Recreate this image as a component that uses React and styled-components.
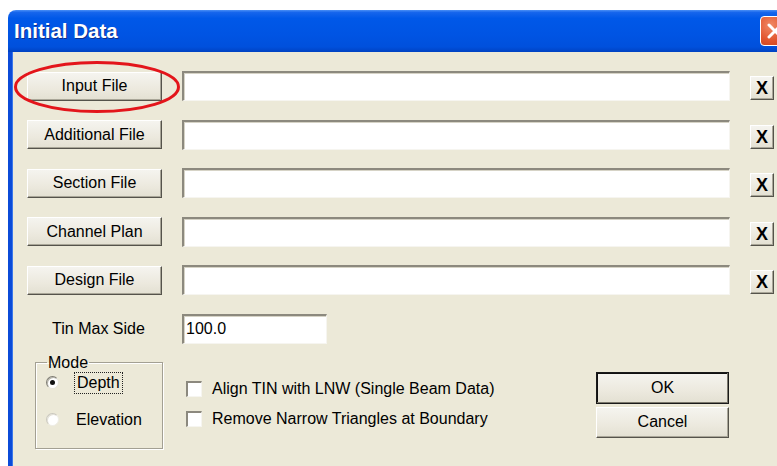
import React from "react";
import styled, { createGlobalStyle } from "styled-components";

const GlobalStyle = createGlobalStyle`
  html, body {
    margin: 0;
    background: #ffffff;
    overflow: hidden;
  }
  body {
    font-family: "Liberation Sans", Arial, sans-serif;
    font-size: 16px;
    color: #000;
  }
`;

const FILE_ROWS = [
  "Input File",
  "Additional File",
  "Section File",
  "Channel Plan",
  "Design File",
];

const InitialData = () => {
  return (
    <Window>
      <TitleBar>
        <Title>Initial Data</Title>
        <CloseButton aria-label="Close">
          <svg width="20" height="20" viewBox="0 0 20 20">
            <path
              d="M4 4 L16 16 M16 4 L4 16"
              stroke="#ffffff"
              strokeWidth="3"
              strokeLinecap="round"
            />
          </svg>
        </CloseButton>
      </TitleBar>
      <Body>
        <FileGrid>
          {FILE_ROWS.map((label, i) => (
            <React.Fragment key={label}>
              <ButtonCell>
                <PushButton>{label}</PushButton>
                {i === 0 && (
                  <Highlight viewBox="0 0 168 54" preserveAspectRatio="none">
                    <ellipse
                      cx="84"
                      cy="27"
                      rx="81.5"
                      ry="24.5"
                      fill="none"
                      stroke="#e3151b"
                      strokeWidth="3"
                    />
                  </Highlight>
                )}
              </ButtonCell>
              <TextField />
              <ClearButton>X</ClearButton>
            </React.Fragment>
          ))}
          <FieldLabel>Tin Max Side</FieldLabel>
          <TextField $width={145}>100.0</TextField>
        </FileGrid>

        <BottomRow>
          <GroupBox>
            <legend>Mode</legend>
            <RadioRow>
              <Radio $checked />
              <FocusLabel>Depth</FocusLabel>
            </RadioRow>
            <RadioRow>
              <Radio $faded />
              <span>Elevation</span>
            </RadioRow>
          </GroupBox>

          <Checks>
            <CheckRow>
              <CheckBox />
              <span>Align TIN with LNW (Single Beam Data)</span>
            </CheckRow>
            <CheckRow>
              <CheckBox />
              <span>Remove Narrow Triangles at Boundary</span>
            </CheckRow>
          </Checks>

          <Actions>
            <DialogButton $default>OK</DialogButton>
            <DialogButton>Cancel</DialogButton>
          </Actions>
        </BottomRow>
      </Body>
    </Window>
  );
};

const Window = styled.div`
  margin: 10px 0 0 8px;
  width: 800px;
  display: flex;
  flex-direction: column;
`;

const TitleBar = styled.div`
  height: 42px;
  box-sizing: border-box;
  display: flex;
  align-items: center;
  justify-content: space-between;
  padding: 0 0 0 6px;
  border-radius: 8px 8px 0 0;
  background: linear-gradient(
    to bottom,
    #4a8ff5 0%,
    #1665ec 6%,
    #0058e8 20%,
    #0054e3 60%,
    #0050dc 88%,
    #0042c2 100%
  );
`;

const Title = styled.div`
  font-family: "Liberation Sans", Arial, sans-serif;
  font-weight: bold;
  font-size: 20.5px;
  color: #ffffff;
  text-shadow: 1px 1px 0 #0f2f8c;
`;

const CloseButton = styled.div`
  width: 30px;
  height: 30px;
  margin-right: 18px;
  box-sizing: border-box;
  border: 1px solid #ffffff;
  border-radius: 4px;
  background: radial-gradient(circle at 35% 30%, #f08a66 0%, #e2562f 55%, #c23d18 100%);
  display: flex;
  align-items: center;
  justify-content: center;
`;

const Body = styled.div`
  height: 414px;
  box-sizing: border-box;
  background: #ece9d8;
  border-left: 4px solid #0b4bd8;
  box-shadow: inset 1px 0 0 #3a77ea;
  padding: 19px 0 0 15px;
`;

const FileGrid = styled.div`
  width: 747px;
  display: grid;
  grid-template-columns: 135px 548px 24px;
  column-gap: 20px;
  row-gap: 18.5px;
  align-items: center;
`;

const ButtonCell = styled.div`
  position: relative;
  display: flex;
`;

const Highlight = styled.svg`
  position: absolute;
  left: -14px;
  top: -12px;
  width: 168px;
  height: 54px;
  overflow: visible;
  pointer-events: none;
`;

const raised = `
  background: linear-gradient(to bottom, #f5f4ef 0%, #ece9de 60%, #e3e0d2 100%);
  border: 1px solid;
  border-color: #ffffff #55534b #55534b #ffffff;
  box-shadow: inset -1px -1px 0 #a9a698;
`;

const PushButton = styled.div`
  ${raised}
  width: 135px;
  height: 29px;
  box-sizing: border-box;
  display: flex;
  align-items: center;
  justify-content: center;
  font-size: 16px;
`;

const TextField = styled.div`
  width: ${(p) => (p.$width ? `${p.$width}px` : "100%")};
  justify-self: start;
  height: 30px;
  box-sizing: border-box;
  background: #ffffff;
  border-top: 2px solid #8c897e;
  border-left: 2px solid #8c897e;
  border-bottom: 1px solid #f6f5f0;
  border-right: 1px solid #f6f5f0;
  box-shadow: inset 1px 1px 0 #d6d3c6;
  padding: 0 2px;
  display: flex;
  align-items: center;
  font-size: 16px;
`;

const ClearButton = styled.div`
  ${raised}
  width: 24px;
  height: 24px;
  margin-top: 4px;
  box-sizing: border-box;
  display: flex;
  align-items: center;
  justify-content: center;
  font-weight: bold;
  font-size: 18px;
  line-height: 1;
`;

const FieldLabel = styled.div`
  text-align: center;
  padding-left: 8px;
  font-size: 16px;
`;

const BottomRow = styled.div`
  width: 747px;
  display: flex;
  align-items: flex-start;
  margin-top: 11px;
`;

const GroupBox = styled.fieldset`
  margin: 0 0 0 8px;
  width: 128px;
  height: 94px;
  box-sizing: border-box;
  padding: 2px 0 0 10px;
  border: 1px solid #a3a093;
  box-shadow: 1px 1px 0 #ffffff, inset 1px 1px 0 #ffffff;
  display: flex;
  flex-direction: column;
  gap: 17px;

  legend {
    padding: 0 1px;
    margin-left: 1px;
    font-size: 16px;
    line-height: 16px;
  }
`;

const RadioRow = styled.div`
  display: flex;
  align-items: center;
  gap: 17px;
  height: 20px;
  font-size: 16px;
`;

const Radio = styled.span`
  position: relative;
  width: 13px;
  height: 13px;
  border-radius: 50%;
  box-sizing: border-box;
  background: #ffffff;
  border: 1px solid;
  border-color: ${(p) => (p.$faded ? "#c9c7bd #eeede6 #eeede6 #c9c7bd" : "#7d7b72 #e6e4da #e6e4da #7d7b72")};
  box-shadow: inset 1px 1px 0 ${(p) => (p.$faded ? "#e4e2d8" : "#b6b4aa")};

  &::after {
    content: "";
    display: ${(p) => (p.$checked ? "block" : "none")};
    position: absolute;
    left: 3px;
    top: 3px;
    width: 5px;
    height: 5px;
    border-radius: 50%;
    background: #111;
  }
`;

const FocusLabel = styled.span`
  outline: 1px dotted #222;
  outline-offset: 1px;
  padding: 0 1px;
`;

const Checks = styled.div`
  margin-left: 23px;
  padding-top: 24px;
  display: flex;
  flex-direction: column;
  gap: 10px;
`;

const CheckRow = styled.div`
  display: flex;
  align-items: center;
  gap: 10px;
  height: 20px;
  font-size: 16px;
`;

const CheckBox = styled.span`
  width: 16px;
  height: 16px;
  box-sizing: border-box;
  background: #ffffff;
  border-top: 2px solid #8c897e;
  border-left: 2px solid #8c897e;
  border-bottom: 1px solid #f6f5f0;
  border-right: 1px solid #f6f5f0;
`;

const Actions = styled.div`
  margin-left: auto;
  margin-right: 45px;
  padding-top: 17px;
  display: flex;
  flex-direction: column;
  gap: 3px;
`;

const DialogButton = styled.div`
  ${raised}
  width: 133px;
  height: ${(p) => (p.$default ? "32px" : "31px")};
  box-sizing: border-box;
  display: flex;
  align-items: center;
  justify-content: center;
  font-size: 16px;
  ${(p) =>
    p.$default &&
    `
    outline: 1px solid #1a1a1a;
    outline-offset: -1px;
    border-color: #ffffff #2a2a2a #2a2a2a #ffffff;
    box-shadow: inset -1px -1px 0 #7b786c, inset 1px 1px 0 #111;
  `}
`;

export default function App() {
  return (
    <>
      <GlobalStyle />
      <InitialData />
    </>
  );
}
